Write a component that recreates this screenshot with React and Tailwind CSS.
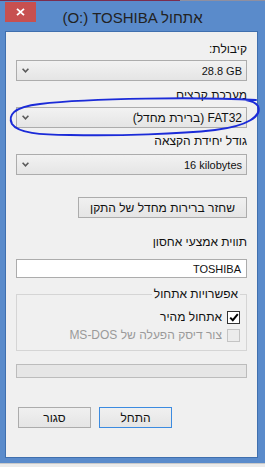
import React from 'react';

const Chevron = () => (
  <svg width="7" height="5" viewBox="0 0 7 5" className="shrink-0">
    <path d="M0.6 0.8 L3.5 3.8 L6.4 0.8" fill="none" stroke="#5a5a5a" strokeWidth="1.6" />
  </svg>
);

const Select = ({ children, className = '' }) => (
  <div
    className={`h-[21px] flex items-center justify-between border border-[#acacac] bg-linear-to-b from-[#f2f2f2] to-[#e5e5e5] pr-[4px] pl-[5px] text-[#111] ${className}`}
  >
    {children}
    <Chevron />
  </div>
);

const Button = ({ children, primary, className = '' }) => (
  <div
    className={`h-[21px] flex items-center justify-center border bg-linear-to-b from-[#f0f0f0] to-[#e5e5e5] text-[#111] ${
      primary ? 'border-[#3c8be0]' : 'border-[#acacac]'
    } ${className}`}
  >
    {children}
  </div>
);

export default function App() {
  return (
    <div className="relative w-[265px] h-[467px] flex flex-col bg-[#5a8bcb] overflow-hidden font-['Liberation_Sans','DejaVu_Sans',sans-serif] text-[12px] leading-[14px]">
      {/* top edge */}
      <div className="h-[1px] flex">
        <div className="w-[180px] bg-[#7b2d4e]" />
        <div className="flex-1 bg-[#8f8fa0]" />
      </div>

      {/* title bar */}
      <div className="relative h-[30px] flex items-center justify-center">
        <div className="absolute left-[5px] top-[1px] w-[31px] h-[20px] bg-[#c75050] flex items-center justify-center">
          <svg width="9" height="8" viewBox="0 0 9 8">
            <path d="M1 0.8 L8 7.2 M8 0.8 L1 7.2" stroke="#fff" strokeWidth="1.8" />
          </svg>
        </div>
        <div dir="ltr" className="text-[15px] leading-[18px] text-[#222] mt-[3px]">
          (O:) TOSHIBA אתחול
        </div>
      </div>

      {/* client area */}
      <div
        dir="rtl"
        className="ml-[5px] mr-[7px] h-[427px] border border-[#3f6fae] bg-[#f0f0f0] px-[10px] flex flex-col text-[#111]"
      >
        <div className="mt-[10px] h-[14px]">קיבולת:</div>
        <Select className="mt-[4px]">
          <span dir="ltr" className="text-[11px]">28.8 GB</span>
        </Select>

        <div className="mt-[7px] h-[14px]">מערכת קבצים</div>
        <Select className="mt-[5px]">
          <span>FAT32 (ברירת מחדל)</span>
        </Select>

        <div className="mt-[6px] h-[14px]">גודל יחידת הקצאה</div>
        <Select className="mt-[6px]">
          <span dir="ltr" className="text-[11px]">16 kilobytes</span>
        </Select>

        <div className="mt-[22px] flex">
          <Button className="w-[169px]">שחזר ברירות מחדל של התקן</Button>
        </div>

        <div className="mt-[17px] h-[14px]">תווית אמצעי אחסון</div>
        <div className="mt-[10px] h-[19px] border border-[#acacac] bg-white flex items-center pr-[5px]">
          <span dir="ltr" className="text-[11px]">TOSHIBA</span>
        </div>

        {/* format options group */}
        <div className="relative mt-[16px] h-[57px] border border-[#d5d5d5] pt-[15px] pr-[6px] flex flex-col gap-[4px]">
          <span className="absolute -top-[8px] right-[6px] px-[2px] bg-[#f0f0f0]">אפשרויות אתחול</span>
          <div className="flex items-center gap-[5px] h-[14px]">
            <span className="w-[13px] h-[13px] border border-[#333] bg-white flex items-center justify-center">
              <svg width="10" height="9" viewBox="0 0 10 9">
                <path d="M1.2 4.6 L3.8 7.2 L8.8 1.2" fill="none" stroke="#000" strokeWidth="2" />
              </svg>
            </span>
            <span>אתחול מהיר</span>
          </div>
          <div className="flex items-center gap-[5px] h-[14px] text-[#9a9a9a]">
            <span className="w-[13px] h-[13px] border border-[#c4c4c4] bg-[#ececec]" />
            <span>צור דיסק הפעלה של MS-DOS</span>
          </div>
        </div>

        {/* progress bar */}
        <div className="mt-[13px] h-[14px] border border-[#bcbcbc] bg-[#e6e6e6]" />

        {/* action buttons */}
        <div className="mt-[29px] flex justify-end gap-[8px] pl-[2px]">
          <Button primary className="w-[73px]">התחל</Button>
          <Button className="w-[73px]">סגור</Button>
        </div>
      </div>

      <div className="h-[5px]" />
      <div className="flex-1 bg-[#ebebeb] border-t border-[#c9c9c9]" />

      {/* hand-drawn ink ellipse */}
      <svg
        className="absolute inset-0 pointer-events-none"
        width="265"
        height="467"
        viewBox="0 0 265 467"
      >
        <path
          d="M256 100 C200 97 90 98 40 104 C12 107 8 116 12 124 C18 133 40 135 70 135 C120 136 180 134 215 130 C248 126 262 116 258 106 C256 103 252 101 246 100"
          fill="none"
          stroke="#1b2bd8"
          strokeWidth="2"
          strokeLinecap="round"
        />
      </svg>
    </div>
  );
}
